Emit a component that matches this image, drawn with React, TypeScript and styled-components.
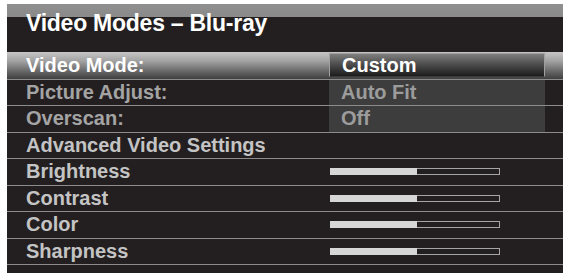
import React from "react";
import styled, { createGlobalStyle } from "styled-components";

const GlobalStyle = createGlobalStyle`
  html, body { margin: 0; padding: 0; background: #ffffff; }
  body { font-family: "Liberation Sans", Arial, Helvetica, sans-serif; overflow: hidden; }
`;

const Frame = styled.div`
  margin: 4px 0 0 7px;
  width: 556px;
  height: 269px;
  background: #231f20;
  overflow: hidden;
`;

const Header = styled.div`
  height: 48px;
  box-sizing: border-box;
  padding: 8px 0 0 19px;
  background: linear-gradient(#8f8f8f 0, #8a8a8a 13px, #231f20 13px);
`;

const Title = styled.h1`
  margin: 0;
  font-size: 23px;
  line-height: 23px;
  font-weight: 700;
  letter-spacing: -0.25px;
  color: #ffffff;
`;

const Row = styled.div<{ $selected?: boolean; $first?: boolean }>`
  display: grid;
  grid-template-columns: 322px 216px 1fr;
  height: 26.5px;
  box-sizing: border-box;
  border-top: ${(p) => (p.$first ? "none" : "1px solid #8c8c8c")};
  background: ${(p) =>
    p.$selected
      ? "linear-gradient(#c6c6c6 0%, #a0a0a0 35%, #626262 75%, #404040 100%)"
      : "#231f20"};
`;

const Label = styled.div<{ $tone: "active" | "dim" | "normal" }>`
  display: flex;
  align-items: center;
  padding-left: 19px;
  font-size: 20px;
  font-weight: 700;
  white-space: nowrap;
  color: ${(p) =>
    p.$tone === "active" ? "#ffffff" : p.$tone === "dim" ? "#a4a4a4" : "#c4c4c4"};
`;

const ValueCell = styled.div`
  display: flex;
  align-items: center;
`;

const ValueBox = styled.div<{ $selected?: boolean }>`
  display: flex;
  align-items: center;
  box-sizing: border-box;
  width: 100%;
  height: ${(p) => (p.$selected ? "24px" : "100%")};
  padding-left: 12px;
  font-size: 20px;
  font-weight: 700;
  color: ${(p) => (p.$selected ? "#ffffff" : "#9c9c9c")};
  background: ${(p) =>
    p.$selected ? "linear-gradient(#7e7e7e 0%, #4a4a4a 50%, #1c1c1c 100%)" : "#3d3d3d"};
  border: ${(p) => (p.$selected ? "1px solid #a0a0a0" : "none")};
  border-bottom-color: #3a3a3a;
`;

const Track = styled.div`
  margin-left: 1px;
  width: 170px;
  height: 7px;
  display: flex;
`;

const Fill = styled.div`
  height: 100%;
  background: #d6d6d6;
`;

const Rest = styled.div`
  flex: 1;
  height: 100%;
  box-sizing: border-box;
  border: 1px solid #a5a5a5;
  border-left: none;
  background: #231f20;
`;

const Spacer = styled.div``;

type Item =
  | { kind: "option"; label: string; value: string; selected?: boolean }
  | { kind: "heading"; label: string }
  | { kind: "slider"; label: string; level: number };

const items: Item[] = [
  { kind: "option", label: "Video Mode:", value: "Custom", selected: true },
  { kind: "option", label: "Picture Adjust:", value: "Auto Fit" },
  { kind: "option", label: "Overscan:", value: "Off" },
  { kind: "heading", label: "Advanced Video Settings" },
  { kind: "slider", label: "Brightness", level: 0.51 },
  { kind: "slider", label: "Contrast", level: 0.51 },
  { kind: "slider", label: "Color", level: 0.51 },
  { kind: "slider", label: "Sharpness", level: 0.51 },
];

export default function App() {
  return (
    <>
      <GlobalStyle />
      <Frame>
        <Header>
          <Title>Video Modes – Blu-ray</Title>
        </Header>
        {items.map((it, i) => {
          if (it.kind === "option") {
            return (
              <Row key={i} $first={i === 0} $selected={it.selected}>
                <Label $tone={it.selected ? "active" : "dim"}>{it.label}</Label>
                <ValueCell>
                  <ValueBox $selected={it.selected}>{it.value}</ValueBox>
                </ValueCell>
                <Spacer />
              </Row>
            );
          }
          if (it.kind === "heading") {
            return (
              <Row key={i}>
                <Label $tone="normal">{it.label}</Label>
                <ValueCell />
                <Spacer />
              </Row>
            );
          }
          return (
            <Row key={i}>
              <Label $tone="normal">{it.label}</Label>
              <ValueCell>
                <Track>
                  <Fill style={{ width: `${Math.round(it.level * 170)}px` }} />
                  <Rest />
                </Track>
              </ValueCell>
              <Spacer />
            </Row>
          );
        })}
        <Row />
      </Frame>
    </>
  );
}
